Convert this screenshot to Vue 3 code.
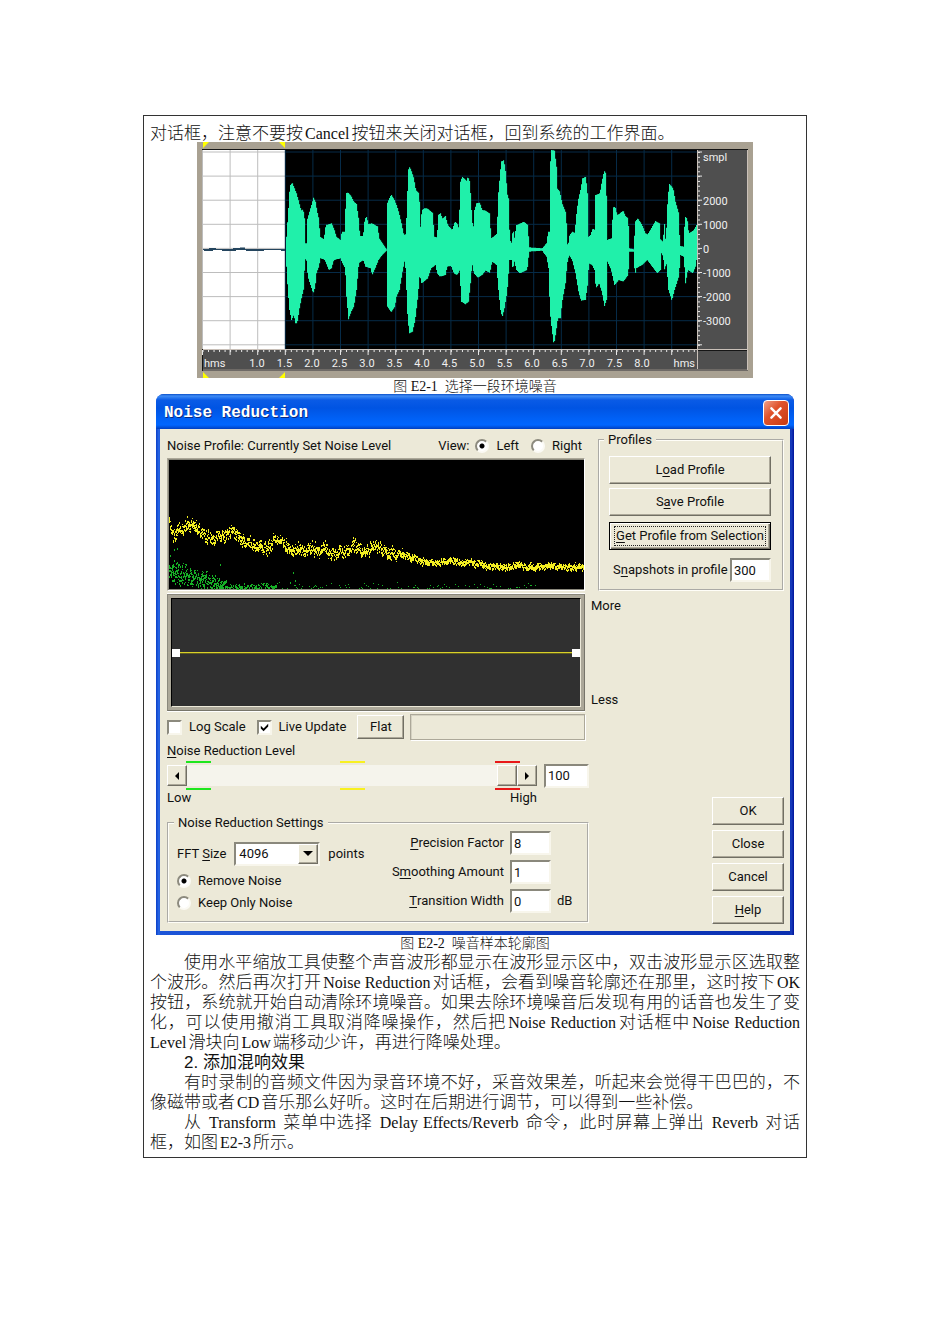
<script setup>
import { ref } from 'vue'

const level = ref(100)
const view = ref('left')
const mode = ref('remove')
const logScale = ref(false)
const liveUpdate = ref(true)
const snapshots = ref('300')
const precision = ref('8')
const smoothing = ref('1')
const transition = ref('0')
const fft = ref('4096')

const topEdge = '438,380 445,280 448,228 455,218 462,235 468,250 475,275 482,302 488,298 492,325 494,400 498,400 500,330 507,305 513,285 519,263 525,275 530,305 536,330 538,380 550,388 556,345 573,340 580,355 588,380 600,390 604,365 612,365 617,250 622,247 632,258 640,275 648,282 655,330 658,378 668,378 672,335 677,317 684,342 695,340 712,350 716,385 725,398 738,418 740,280 752,253 762,270 770,290 777,315 783,340 790,375 796,372 800,275 803,180 808,170 815,190 820,205 826,240 836,250 840,350 844,300 852,295 860,295 870,303 878,310 880,380 890,382 893,315 900,310 906,325 915,318 922,345 935,360 943,335 950,340 955,355 960,215 965,200 978,212 982,200 988,215 993,300 998,365 1002,300 1008,280 1018,278 1025,300 1035,302 1047,310 1052,385 1065,375 1070,370 1072,270 1078,200 1082,155 1090,150 1096,190 1100,250 1104,265 1108,390 1113,398 1118,352 1121,390 1123,375 1128,345 1140,340 1150,335 1162,345 1166,412 1205,415 1218,400 1223,365 1227,365 1229,165 1233,120 1242,122 1248,170 1250,235 1258,245 1265,280 1277,310 1280,400 1283,408 1286,378 1295,365 1303,368 1307,320 1313,270 1320,240 1326,205 1336,200 1341,250 1344,380 1350,375 1357,355 1363,360 1365,255 1378,250 1385,210 1391,183 1397,190 1400,390 1413,385 1418,292 1424,290 1430,315 1438,310 1448,302 1455,318 1463,325 1467,415 1480,418 1484,335 1492,325 1505,345 1515,370 1522,373 1535,350 1545,333 1557,340 1560,388 1567,395 1572,342 1576,400 1582,260 1587,222 1598,235 1605,275 1615,310 1618,408 1630,410 1633,320 1640,325 1645,370 1660,360 1668,345 1671,400'
const bottomEdge = '438,470 442,540 447,600 453,630 460,615 466,645 472,630 476,600 484,560 490,535 493,455 497,440 502,500 510,525 518,550 524,530 528,490 535,470 540,445 553,450 565,480 573,475 580,450 600,445 606,460 614,475 618,560 624,628 632,605 640,590 648,540 655,460 668,450 675,470 690,475 695,495 704,475 714,450 725,435 738,422 741,590 752,607 763,590 768,560 777,540 785,490 792,455 796,480 800,600 806,670 816,665 824,630 832,560 838,490 842,520 850,515 862,505 872,475 885,465 890,490 898,500 915,495 920,470 932,468 940,490 950,495 958,480 962,575 975,583 984,575 990,520 995,460 1000,490 1012,503 1025,495 1035,482 1048,488 1055,455 1068,465 1073,530 1080,600 1085,622 1092,595 1100,545 1107,450 1113,450 1117,478 1122,455 1128,480 1138,490 1160,480 1166,425 1205,422 1218,440 1225,480 1228,600 1232,640 1240,705 1246,670 1252,625 1260,625 1265,575 1275,520 1280,460 1286,435 1295,450 1305,490 1315,550 1322,572 1335,570 1342,520 1345,460 1355,465 1362,480 1366,535 1376,520 1384,545 1392,588 1398,570 1401,455 1412,480 1422,525 1435,510 1448,515 1463,495 1467,425 1480,425 1483,500 1487,475 1505,465 1520,450 1535,470 1550,490 1560,480 1563,430 1568,440 1573,488 1577,450 1584,540 1594,572 1602,540 1615,500 1620,435 1630,440 1635,520 1642,480 1657,490 1665,470 1671,430'

/* Steps the envelope sample by sample so the edges look like drawn bars. */
const parse = (s) => s.split(' ').map((p) => p.split(',').map(Number))
const at = (pts, x) => {
  if (x <= pts[0][0]) return pts[0][1]
  for (let i = 1; i < pts.length; i++) {
    if (x <= pts[i][0]) {
      const [x0, y0] = pts[i - 1]
      const [x1, y1] = pts[i]
      return y0 + ((y1 - y0) * (x - x0)) / (x1 - x0)
    }
  }
  return pts[pts.length - 1][1]
}
const upper = parse(topEdge)
const lower = parse(bottomEdge)
let wave = ''
for (let x = 438; x < 1671; x += 3) {
  const a = at(upper, x)
  const b = at(lower, x)
  wave += `M${x} ${a.toFixed(0)}h3.4V${b.toFixed(0)}h-3.4z`
}

const hLines = Array.from({ length: 9 }, (_, i) => 10 + i * 24.1)
const vLines = Array.from({ length: 18 }, (_, i) => 5.5 + i * 27.6)
const minorX = Array.from({ length: 90 }, (_, i) => 5.5 + i * 5.52)
const minorY = Array.from({ length: 41 }, (_, i) => 10 + i * 4.82)
const timeLabels = ['1.0', '1.5', '2.0', '2.5', '3.0', '3.5', '4.0', '4.5', '5.0', '5.5', '6.0', '6.5', '7.0', '7.5', '8.0']
const levelLabels = ['2000', '1000', '0', '-1000', '-2000', '-3000']

let seed = 7
const rnd = () => {
  seed = (seed * 16807) % 2147483647
  return seed / 2147483647
}
const profile = [[2, 63], [6, 73], [15, 69], [29, 66], [34, 77], [50, 79], [62, 73], [75, 79], [88, 88], [100, 90], [108, 82], [118, 87], [128, 93], [145, 90], [160, 91], [170, 96], [180, 91], [187, 87], [195, 93], [205, 87], [212, 89], [222, 96], [235, 95], [250, 102], [265, 103], [285, 103], [300, 104], [320, 107], [345, 108], [380, 108], [417, 109]]
let yellow = ''
let green = ''
let drift = 0
for (let x = 2; x < 417; x++) {
  const spread = x < 230 ? 9 : x < 260 ? 6 : 5
  drift = drift * 0.5 + (rnd() - 0.5) * spread * 0.6
  for (let k = 0; k < 5; k++) {
    const y = Math.round(at(profile, x) + drift + (rnd() + rnd() - 1) * spread * 0.8)
    yellow += `M${x} ${y}h1v${k < 3 ? 2 : 1}h-1z`
  }
  const n = x < 60 ? 6 : x < 110 ? 3 : 1
  for (let k = 0; k < n; k++) {
    const mean = x < 60 ? 112 + x * 0.27 : 129
    const amp = x < 60 ? 15 - x * 0.12 : 5
    const y = Math.round(mean + (rnd() + rnd() - 1) * amp)
    if (y < 131 && (x < 110 || (x < 370 && rnd() < 0.5))) green += `M${x} ${y}h1v${k % 2 + 1}h-1z`
  }
  if (x < 12) green += `M${x} ${Math.round(90 + rnd() * 35)}h1v2h-1z`
}
green += 'M126 114h1v2h-1zM128 122h1v2h-1zM123 124h1v2h-1zM53 106h1v2h-1z'
</script>

<template>
  <main class="page" lang="zh-CN">
    <article class="sheet">
      <p class="lead">对话框，注意不要按<span class="en">Cancel</span>按钮来关闭对话框，回到系统的工作界面。</p>

      <figure>
        <svg class="wave" viewBox="0 0 556 236" role="img" aria-label="waveform">
          <rect width="556" height="236" fill="#a9a192" />
          <rect x="5" y="7" width="546" height="222" fill="#151515" />
          <rect x="6" y="8" width="82" height="199" fill="#fff" />
          <rect x="88" y="8" width="412" height="199" fill="#000" />
          <g>
            <rect v-for="y in hLines" :key="'a' + y" x="6" :y="y - 0.5" width="82" height="1" fill="#bdbdbd" />
            <rect v-for="y in hLines" :key="'b' + y" x="88" :y="y - 0.5" width="412" height="1" fill="#062b48" />
            <rect v-for="(x, i) in vLines" :key="'c' + x" :x="x - 0.5" y="8" width="1" height="199" :fill="i < 3 ? '#bdbdbd' : '#062b48'" />
          </g>
          <path d="M6 107.500h82" stroke="#24455e" stroke-width="1" />
          <path d="M7 108h9M12 107h7M25 108h14M36 107h12M43 106.500h5M49 108h7M55 108h12M84 108h4" stroke="#24455e" stroke-width="2" />
          <g transform="translate(-57 -32) scale(.33333)">
            <path :d="wave" fill="#20f0aa" />
          </g>
          <rect x="6" y="207" width="494" height="20" fill="#4f4f4f" />
          <rect x="501" y="8" width="49" height="199" fill="#4f4f4f" />
          <rect x="501" y="209" width="49" height="18" fill="#4f4f4f" />
          <path d="M6 207.500h544M500.500 8v219M6 228h545M550.500 8v220" stroke="#c9c0b8" stroke-width="1" fill="none" />
          <g fill="#e8e8e8">
            <rect v-for="x in minorX" :key="'d' + x" :x="x" y="208" width="1" height="2" />
            <rect v-for="x in vLines" :key="'e' + x" :x="x - 0.5" y="208" width="1" height="5" />
            <rect v-for="y in minorY" :key="'f' + y" x="501" :y="y" width="2" height="1" />
            <rect v-for="y in hLines" :key="'g' + y" x="501" :y="y - 0.5" width="4" height="1" />
          </g>
          <g class="ruler">
            <text x="7" y="225">hms</text>
            <text v-for="(t, i) in timeLabels" :key="t" :x="60 + i * 27.5" y="225" text-anchor="middle">{{ t }}</text>
            <text x="498" y="225" text-anchor="end">hms</text>
            <text x="506" y="19">smpl</text>
            <text v-for="(t, i) in levelLabels" :key="t" x="506" :y="62.500 + i * 24.1">{{ t }}</text>
          </g>
          <path d="M6 0h6l-6 6zM88 0h-6l6 6zM6 230v6h6zM88 230v6h-6z" fill="#ff0" />
        </svg>
        <figcaption>图 E2-1&nbsp; 选择一段环境噪音</figcaption>
      </figure>

      <figure>
        <section class="dialog" lang="en">
          <header class="titlebar">
            <h1>Noise Reduction</h1>
            <button class="close" aria-label="Close window">
              <svg viewBox="0 0 26 26"><path d="M8 8l10 10M18 8l-10 10" stroke="#fff" stroke-width="2.600" stroke-linecap="round" /></svg>
            </button>
          </header>

          <div class="body">
            <div class="left">
              <div class="head">
                <span class="grow">Noise Profile: Currently Set Noise Level</span>
                <span>View:</span>
                <label><input v-model="view" type="radio" name="view" value="left" />Left</label>
                <label><input v-model="view" type="radio" name="view" value="right" />Right</label>
              </div>

              <svg class="graph" viewBox="0 0 418 133" preserveAspectRatio="none" role="img" aria-label="noise profile">
                <rect width="418" height="133" fill="#fff" />
                <path d="M0 0h418l-1 1H1v131l-1 1z" fill="#aca899" />
                <rect x="1" y="1" width="416" height="131" fill="#8a887c" />
                <rect x="2" y="2" width="415" height="129" fill="#000" />
                <path :d="green" fill="#16b026" />
                <path :d="yellow" fill="#f2ee22" />
              </svg>

              <div class="eq">
                <div class="eq-field">
                  <i class="node"></i><i class="eq-line"></i><i class="node"></i>
                </div>
              </div>

              <div class="options">
                <label><input v-model="logScale" type="checkbox" /><span>Log Scale</span></label>
                <label>
                  <span class="tick">
                    <input v-model="liveUpdate" type="checkbox" />
                    <svg v-if="liveUpdate" viewBox="0 0 14 14"><path d="M3 5v3l3 3 5-5V3L6 8z" /></svg>
                  </span>
                  <span>Live Update</span>
                </label>
                <button class="btn flat">Flat</button>
                <output class="status"></output>
              </div>

              <label class="level-label" for="level"><u>N</u>oise Reduction Level</label>
              <div class="level">
                <div class="bar">
                  <button class="btn arrow" aria-label="Lower"><svg viewBox="0 0 8 10"><path d="M6 1v8L2 5z" /></svg></button>
                  <input id="level" v-model="level" type="range" min="0" max="100" />
                  <button class="btn arrow" aria-label="Raise"><svg viewBox="0 0 8 10"><path d="M2 1v8l4-4z" /></svg></button>
                  <i class="mark low"></i>
                  <i class="mark mid"></i>
                  <i class="mark high"></i>
                </div>
                <input v-model="level" class="box amount" type="text" aria-label="Level value" />
              </div>
              <div class="ends"><span>Low</span><span>High</span></div>

              <fieldset class="settings">
                <legend>Noise Reduction Settings</legend>
                <div class="columns">
                  <div class="choices">
                    <div class="fft">
                      <label for="fft">FFT <u>S</u>ize</label>
                      <span class="select">
                        <select id="fft" v-model="fft"><option>4096</option></select>
                        <span class="btn drop"><svg viewBox="0 0 10 6"><path d="M0 0h10L5 5z" /></svg></span>
                      </span>
                      <span>points</span>
                    </div>
                    <label><input v-model="mode" type="radio" name="mode" value="remove" />Remove Noise</label>
                    <label><input v-model="mode" type="radio" name="mode" value="keep" />Keep Only Noise</label>
                  </div>
                  <div class="numbers">
                    <label for="precision"><u>P</u>recision Factor</label>
                    <input id="precision" v-model="precision" class="box" type="text" />
                    <span></span>
                    <label for="smoothing">S<u>m</u>oothing Amount</label>
                    <input id="smoothing" v-model="smoothing" class="box" type="text" />
                    <span></span>
                    <label for="transition"><u>T</u>ransition Width</label>
                    <input id="transition" v-model="transition" class="box" type="text" />
                    <span>dB</span>
                  </div>
                </div>
              </fieldset>
            </div>

            <div class="right">
              <fieldset class="profiles">
                <legend>Profiles</legend>
                <button class="btn">L<u>o</u>ad Profile</button>
                <button class="btn">S<u>a</u>ve Profile</button>
                <button class="btn focused"><span><u>G</u>et Profile from Selection</span></button>
                <div class="snap">
                  <label for="snap">S<u>n</u>apshots in profile</label>
                  <input id="snap" v-model="snapshots" class="box" type="text" />
                </div>
              </fieldset>
              <div class="range"><span>More</span><span>Less</span></div>
              <div class="actions">
                <button class="btn">OK</button>
                <button class="btn">Close</button>
                <button class="btn">Cancel</button>
                <button class="btn"><u>H</u>elp</button>
              </div>
            </div>
          </div>
        </section>
        <figcaption>图 E2-2&nbsp; 噪音样本轮廓图</figcaption>
      </figure>

      <p>
        <span class="line indent">使用水平缩放工具使整个声音波形都显示在波形显示区中，双击波形显示区选取整</span>
        <span class="line">个波形。然后再次打开<span class="en">Noise Reduction</span>对话框，会看到噪音轮廓还在那里，这时按下<span class="en end">OK</span></span>
        <span class="line">按钮，系统就开始自动清除环境噪音。如果去除环境噪音后发现有用的话音也发生了变</span>
        <span class="line">化，可以使用撤消工具取消降噪操作，然后把<span class="en">Noise Reduction</span>对话框中<span class="en end">Noise Reduction</span></span>
        <span class="line last"><span class="en start">Level</span>滑块向<span class="en">Low</span>端移动少许，再进行降噪处理。</span>
      </p>
      <h2>2. 添加混响效果</h2>
      <p>
        <span class="line indent">有时录制的音频文件因为录音环境不好，采音效果差，听起来会觉得干巴巴的，不</span>
        <span class="line last">像磁带或者<span class="en">CD</span>音乐那么好听。这时在后期进行调节，可以得到一些补偿。</span>
      </p>
      <p>
        <span class="line indent">从 <span class="en">Transform</span> 菜单中选择 <span class="en">Delay Effects/Reverb</span> 命令，此时屏幕上弹出 <span class="en">Reverb</span> 对话</span>
        <span class="line last">框，如图<span class="en">E2-3</span>所示。</span>
      </p>
    </article>
  </main>
</template>

<style>
body { background: #fff; }
</style>

<style scoped>
* { box-sizing: border-box; }
.page { padding: 115px 143px; }
.sheet {
  border: 1px solid #333;
  padding: 8px 6px 4px;
  font: 300 17px/20px "Liberation Serif", "Noto Sans CJK SC", serif;
  color: #111;
}
p, h1, h2, figure { margin: 0; }
.lead { height: 18px; white-space: nowrap; }
.en { font-size: 16px; line-height: 16px; margin: 0 2px; }
.start { margin-left: 0; }
.end { margin-right: 0; }
figure { display: flex; flex-direction: column; align-items: center; }
figcaption { font-size: 14px; line-height: 18px; height: 18px; }
.wave { width: 556px; max-width: 100%; display: block; }
figure:first-of-type figcaption { height: 16px; }
.ruler { font: 400 11px Roboto, "Liberation Sans", sans-serif; fill: #f0f0f0; }
.line { display: block; height: 20px; white-space: nowrap; text-align: justify; text-align-last: justify; }
.last { text-align-last: left; }
.indent { padding-left: 34px; }
h2 { font: 400 17px/20px "Liberation Sans", "Noto Sans CJK SC", sans-serif; height: 20px; padding-left: 34px; }

.dialog {
  width: 100%;
  max-width: 638px;
  font: 400 13px/16px Roboto, "Liberation Sans", sans-serif;
  color: #111;
  border-radius: 8px 8px 0 0;
  padding: 0 4px 4px;
  background: linear-gradient(90deg, #0a3fc8, #2a6ae8 3px, #1c55d8 4px, #0a2fb0 calc(100% - 4px), #1a3fc0 calc(100% - 3px), #00159a);
}
.titlebar {
  height: 35px;
  margin: 0 -4px;
  padding: 2px 5px 0 8px;
  border-radius: 8px 8px 0 0;
  display: flex;
  align-items: center;
  justify-content: space-between;
  background: linear-gradient(#0a4fc8, #3f8cf5 2px, #0a5be6 6px, #0054e3 14px, #0062f8 26px, #0066ff 31px, #003fc0 35px);
}
h1 { font: 700 16px/20px "Liberation Mono", monospace; color: #fff; text-shadow: 1px 1px #0a2a80; }
.close {
  width: 26px;
  height: 26px;
  padding: 0;
  border: 1px solid #fff;
  border-radius: 4px;
  background: linear-gradient(135deg, #f0a088, #e0532c 40%, #c83a10);
}
.close svg { display: block; width: 24px; height: 24px; }
.body {
  display: grid;
  grid-template-columns: minmax(0, 1fr) 193px;
  gap: 2px;
  padding: 0 6px 7px 7px;
  background: #ece9d8;
}
.left, .right { display: flex; flex-direction: column; }
.head { display: flex; align-items: center; height: 29px; padding: 4px 7px 0 0; gap: 6px; }
.head label + label { margin-left: 6px; }
.grow { flex: 1; }
label { display: inline-flex; align-items: center; white-space: pre; }
u { text-underline-offset: 2px; }
input, select { font: inherit; color: inherit; margin: 0; border-radius: 0; }
input[type="radio"] {
  appearance: none;
  width: 14px;
  height: 14px;
  margin-right: 7px;
  border: 2px solid;
  border-color: #8c8a7e #fbfaf4 #fbfaf4 #8c8a7e;
  border-radius: 50%;
  background: #fff;
}
input[type="radio"]:checked { background: radial-gradient(circle, #000 2px, #fff 3px); }
input[type="checkbox"] {
  appearance: none;
  display: block;
  width: 15px;
  height: 15px;
  border: 2px solid;
  border-color: #8c8a7e #f8f6ec #f8f6ec #8c8a7e;
  background: #fff;
}
.graph { display: block; width: calc(100% - 4px); height: 133px; }
.eq {
  height: 117px;
  margin: 3px 4px 0 0;
  border: 1px solid;
  border-color: #8a887c #77756a #77756a #8a887c;
  padding: 3px;
  background: #aca899;
  box-shadow: 0 1px #fff, 0 -1px #fff;
}
.eq-field {
  height: 100%;
  display: flex;
  align-items: center;
  background: #303030;
  border: 1px solid;
  border-color: #000 #ece9d8 #ece9d8 #000;
}
.node { width: 8px; height: 8px; background: #fff; }
.eq-line { flex: 1; height: 2px; background: #d8d028; border-bottom: 1px solid #605c20; }
.options { display: flex; align-items: center; height: 26px; margin: 3px 4px 0 0; }
.options label { gap: 7px; margin-right: 11px; }
.tick { position: relative; }
.tick svg { position: absolute; top: 1px; left: 1px; width: 13px; height: 13px; pointer-events: none; }
.btn {
  font: inherit;
  color: inherit;
  height: 28px;
  padding: 0;
  background: #ece9d8;
  border: 1px solid;
  border-color: #fff #716f64 #716f64 #fff;
  box-shadow: inset -1px -1px #aca899;
}
.flat { width: 47px; height: 24px; margin-right: 6px; }
.status {
  flex: 1;
  height: 26px;
  border: 1px solid #aca899;
  box-shadow: 1px 1px #fff, inset 1px 1px #d5d2c2;
}
.level-label { height: 21px; }
.level { display: flex; justify-content: space-between; align-items: center; height: 29px; }
.bar { position: relative; display: flex; width: 370px; height: 29px; align-items: center; }
.arrow { width: 20px; height: 21px; display: grid; place-items: center; }
.arrow svg { width: 8px; height: 10px; }
input[type="range"] { appearance: none; flex: 1; min-width: 0; height: 21px; background: #f5f4ec; }
input[type="range"]::-webkit-slider-thumb {
  appearance: none;
  width: 20px;
  height: 21px;
  background: #ece9d8;
  border: 1px solid;
  border-color: #fff #716f64 #716f64 #fff;
  box-shadow: inset -1px -1px #aca899;
}
.mark { position: absolute; top: 0; bottom: 0; width: 25px; border: solid; border-width: 2px 0; pointer-events: none; }
.low { left: 19px; border-color: #1ee61e; }
.mid { left: 173px; border-color: #f8f020; }
.high { right: 17px; border-color: #e81818; }
.box {
  width: 41px;
  height: 24px;
  padding: 0 2px;
  border: 2px solid;
  border-color: #8a887c #f8f6ec #f8f6ec #8a887c;
  background: #fff;
}
.amount { width: 45px; }
.ends { display: flex; justify-content: space-between; width: 370px; height: 25px; }
fieldset { margin: 0; min-width: 0; border: 2px groove #fffef8; padding: 0; }
legend { margin-left: 5px; padding: 0 4px; height: 16px; }
.settings { height: 108px; }
.columns { display: flex; justify-content: space-between; padding-left: 8px; }
.choices { display: flex; flex-direction: column; align-items: flex-start; padding-top: 10px; gap: 6px; }
.choices > label { height: 16px; }
.fft { display: flex; align-items: center; gap: 8px; height: 26px; }
.select { position: relative; width: 86px; height: 24px; }
.select select {
  appearance: none;
  width: 100%;
  height: 24px;
  padding: 0 3px;
  border: 2px solid;
  border-color: #8a887c #f8f6ec #f8f6ec #8a887c;
  background: #fff;
}
.drop { position: absolute; top: 2px; right: 2px; width: 20px; height: 20px; display: grid; place-items: center; pointer-events: none; }
.drop svg { width: 10px; height: 6px; }
.numbers { display: grid; grid-template-columns: auto 41px 30px; gap: 5px 6px; align-items: center; }
.numbers label { justify-self: end; }
.profiles { margin: 3px 0 0 7px; height: 159px; padding: 0 11px 0 9px; }
.profiles legend { margin-left: -5px; }
.profiles .btn { display: block; width: 100%; margin-top: 4px; }
.profiles legend + .btn { margin-top: 8px; }
.profiles .focused { margin-top: 6px; padding: 2px; border-color: #000; box-shadow: inset 1px 1px #fff, inset -1px -1px #716f64, inset -2px -2px #aca899; }
.focused span { display: block; border: 1px dotted #222; margin: 0 2px; line-height: 18px; }
.snap { display: flex; align-items: center; justify-content: space-between; margin-top: 8px; padding-left: 4px; }
.range { display: flex; flex-direction: column; justify-content: space-between; height: 110px; margin-top: 7px; }
.actions { display: flex; flex-direction: column; gap: 5px; width: 72px; margin: 89px 0 0 auto; }
</style>
